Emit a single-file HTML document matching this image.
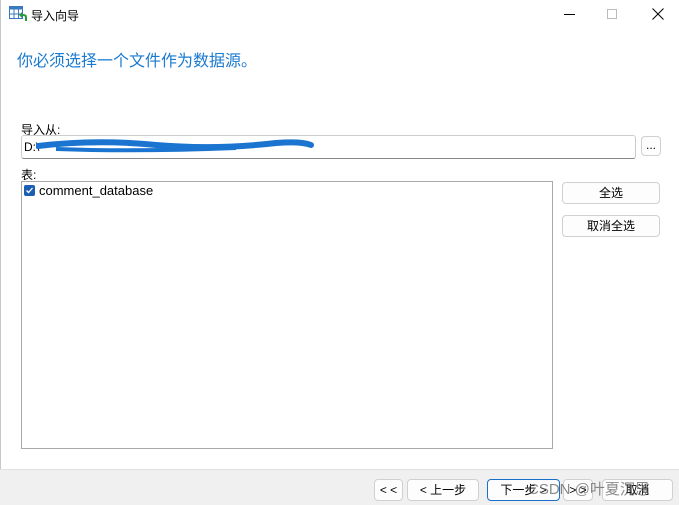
<!DOCTYPE html>
<html><head><meta charset="utf-8"><style>
*{box-sizing:border-box;margin:0;padding:0}
body{width:679px;height:505px;background:#fff;font-family:"Liberation Sans","Noto Sans CJK SC",sans-serif;font-size:12px;color:#000;position:relative;overflow:hidden}
.a{position:absolute}
.btn{position:absolute;background:#fdfdfd;border:1px solid #d0d0d0;border-radius:4px;text-align:center;font-size:12px;line-height:20px}
</style></head><body>
<div class="a" style="left:0;top:0;width:1px;height:505px;background:#c8c8c8"></div>
<svg class="a" style="left:9px;top:6px" width="18" height="16" viewBox="0 0 18 16">
<rect x="0.5" y="0.5" width="13" height="12" fill="#fff" stroke="#3a78c0"/>
<rect x="0.5" y="0.5" width="13" height="3" fill="#3a78c0"/>
<line x1="5" y1="0.5" x2="5" y2="12.5" stroke="#3a78c0"/><line x1="9.5" y1="0.5" x2="9.5" y2="12.5" stroke="#3a78c0"/>
<line x1="0.5" y1="8" x2="13.5" y2="8" stroke="#3a78c0"/>
<path d="M17 15 L17 11 Q17 9 14 9 L12 9" stroke="#2a9a3a" stroke-width="2" fill="none"/><path d="M13 6 L10 9 L13 12Z" fill="#2a9a3a"/>
</svg>
<div class="a" style="left:31px;top:7px;font-size:12px">导入向导</div>
<div class="a" style="left:564px;top:14px;width:11px;height:1px;background:#000"></div>
<div class="a" style="left:607px;top:9px;width:10px;height:10px;border:1px solid #bbb"></div>
<svg class="a" style="left:652px;top:8px" width="12" height="12"><path d="M0.5 0.5L11.5 11.5M11.5 0.5L0.5 11.5" stroke="#000"/></svg>
<div class="a" style="left:17px;top:47px;font-size:16px;color:#1a7ad0">你必须选择一个文件作为数据源。</div>
<div class="a" style="left:21px;top:121px">导入从:</div>
<div class="a" style="left:21px;top:135px;width:615px;height:24px;border:1px solid #ccc;border-bottom-color:#888;border-radius:3px"></div>
<div class="a" style="left:24px;top:140px">D:\</div>
<svg class="a" style="left:36px;top:136px" width="280" height="20"><path d="M2 10 Q60 3 120 9 Q180 14 240 7 Q265 5 275 9" stroke="#1a74d0" stroke-width="6" fill="none" stroke-linecap="round"/><path d="M20 13 Q100 16 200 12" stroke="#1a74d0" stroke-width="4" fill="none"/></svg>
<div class="btn" style="left:641px;top:136px;width:20px;height:20px;line-height:16px">...</div>
<div class="a" style="left:21px;top:166px">表:</div>
<div class="a" style="left:21px;top:181px;width:532px;height:268px;border:1px solid #aaa"></div>
<div class="a" style="left:24px;top:185px;width:11px;height:11px;background:#1a5fb4;border-radius:2px"></div>
<svg class="a" style="left:24px;top:185px" width="11" height="11"><path d="M2.5 5.5L4.5 7.5L8.5 3" stroke="#fff" stroke-width="1.3" fill="none"/></svg>
<div class="a" style="left:39px;top:183px;font-size:13px">comment_database</div>
<div class="btn" style="left:562px;top:182px;width:98px;height:22px">全选</div>
<div class="btn" style="left:562px;top:215px;width:98px;height:22px">取消全选</div>
<div class="a" style="left:0;top:469px;width:679px;height:36px;background:#f0f0f0;border-top:1px solid #e0e0e0"></div>
<div class="btn" style="left:374px;top:479px;width:29px;height:22px">&lt; &lt;</div>
<div class="btn" style="left:407px;top:479px;width:72px;height:22px">&lt; 上一步</div>
<div class="btn" style="left:487px;top:479px;width:73px;height:22px;border-color:#1a6fc8">下一步 &gt;</div>
<div class="btn" style="left:563px;top:479px;width:30px;height:22px">&gt; &gt;</div>
<div class="btn" style="left:602px;top:479px;width:71px;height:22px">取消</div>
<div class="a" style="left:528px;top:478px;font-size:15px;color:rgba(90,90,90,.7)">CSDN @叶夏沉思</div>
</body></html>
